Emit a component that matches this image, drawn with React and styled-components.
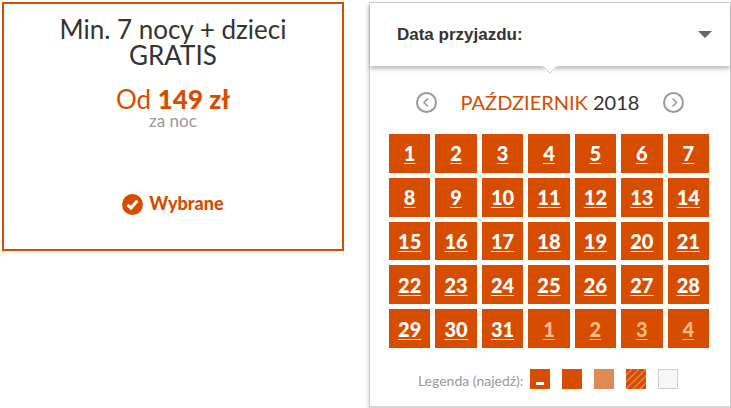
import React from "react";
import styled, { createGlobalStyle } from "styled-components";

const ACCENT = "#d64d00";

const GlobalStyle = createGlobalStyle`
  *, *::before, *::after { box-sizing: border-box; }
  body {
    margin: 0;
    background: #fff;
    color: #333;
    font-family: Lato, "Liberation Sans", sans-serif;
  }
  button { font: inherit; color: inherit; background: none; border: 0; padding: 0; cursor: pointer; }
`;

const Page = styled.main`
  display: grid;
  grid-template-columns: 17fr 18fr;
  column-gap: 25px;
  align-items: start;
  padding: 2px 0 0 2px;
`;

const OfferCard = styled.section`
  display: flex;
  flex-direction: column;
  align-items: center;
  padding: 12px 40px 34px;
  border: 2px solid ${ACCENT};
  text-align: center;
`;

const OfferTitle = styled.h2`
  margin: 0;
  max-width: 250px;
  font-size: 26px;
  font-weight: 400;
  line-height: 26px;
`;

const Price = styled.p`
  margin: 18px 0 0;
  color: ${ACCENT};
  font-size: 26px;
  font-weight: 400;
  line-height: 26px;

  strong { font-weight: 900; }
`;

const PriceUnit = styled.p`
  margin: 0;
  color: #999;
  font-size: 17px;
  line-height: 18px;
`;

const SelectedButton = styled.button`
  display: flex;
  align-items: center;
  gap: 6px;
  margin-top: 60px;

  svg { display: block; margin-top: 4px; }
`;

const SelectedLabel = styled.span`
  color: ${ACCENT};
  font-size: 18px;
  font-weight: 900;
  line-height: 22px;
`;

const Panel = styled.section`
  border: 1px solid #ccc;
  border-bottom: 0;
  box-shadow: -1px 2px 4px rgba(0, 0, 0, 0.15);
`;

const PanelHeader = styled.button`
  position: relative;
  display: flex;
  align-items: center;
  justify-content: space-between;
  width: 100%;
  height: 63px;
  padding: 0 18px 0 27px;
  background: #fff;
  box-shadow: 0 3px 4px rgba(0, 0, 0, 0.25);
`;

const HeaderLabel = styled.span`
  color: #333;
  font-family: "Liberation Sans", Arial, sans-serif;
  font-size: 17px;
  font-weight: 700;
  line-height: 20px;
`;

const Notch = styled.svg`
  position: absolute;
  top: 100%;
  left: 50%;
  transform: translateX(-50%);
`;

const Calendar = styled.div`
  padding: 24px 21px 15px 19px;
`;

const MonthBar = styled.div`
  display: flex;
  align-items: center;
  justify-content: space-between;
  padding: 0 25px 0 27px;
`;

const MonthName = styled.h3`
  margin: 0;
  font-size: 20px;
  font-weight: 400;
  line-height: 24px;

  span { color: ${ACCENT}; }
`;

const ArrowButton = styled.button`
  display: flex;
`;

const Days = styled.div`
  display: grid;
  grid-template-columns: repeat(7, 1fr);
  grid-auto-rows: 1fr;
  gap: 5px;
  height: 214px;
  margin-top: 20px;
`;

const Day = styled.a`
  display: flex;
  align-items: center;
  justify-content: center;
  background: ${ACCENT};
  color: ${(p) => (p.$outside ? "#ffbb8c" : "#fff")};
  font-size: 20px;
  font-weight: 900;
  line-height: 24px;
  text-decoration: underline;
  text-decoration-thickness: 1px;
  text-underline-offset: 2px;
  text-decoration-skip-ink: none;
`;

const Legend = styled.div`
  display: flex;
  align-items: flex-start;
  gap: 12px;
  margin: 21px 0 0 29px;
`;

const LegendLabel = styled.span`
  margin-right: -5px;
  color: #999;
  font-size: 14px;
  line-height: 20px;
  padding-top: 2px;
`;

const swatches = {
  arrival: `background: ${ACCENT};`,
  available: `background: ${ACCENT};`,
  partial: "background: #dd8a55;",
  limited: `background: ${ACCENT};`,
  none: "background: #f7f7f7; border: 1px solid #ccc;",
};

const Swatch = styled.span`
  display: flex;
  width: 20px;
  height: 20px;
  ${(p) => swatches[p.$kind]}
`;

const PanelFoot = styled.div`
  height: 2px;
  background: #d5d5d5;
`;

const days = [
  ...Array.from({ length: 31 }, (_, i) => ({ n: i + 1, outside: false })),
  ...[1, 2, 3, 4].map((n) => ({ n, outside: true })),
];

const legend = [
  { kind: "arrival", title: "Dzień przyjazdu" },
  { kind: "available", title: "Dostępny" },
  { kind: "partial", title: "Częściowo dostępny" },
  { kind: "limited", title: "Ograniczony" },
  { kind: "none", title: "Niedostępny" },
];

function CheckIcon() {
  return (
    <svg width="21" height="21" viewBox="0 0 21 21" aria-hidden="true">
      <circle cx="10.5" cy="10.5" r="10.5" fill={ACCENT} />
      <path d="M5.5 10.8 L9 14 L15.3 6.8" fill="none" stroke="#fff" strokeWidth="3" />
    </svg>
  );
}

function ArrowIcon({ direction }) {
  return (
    <svg width="21" height="21" viewBox="0 0 21 21" fill="none" stroke="#999" aria-hidden="true">
      <circle cx="10.5" cy="10.5" r="9.5" strokeWidth="2" />
      <path
        d={direction === "left" ? "M12 6.5 L8 10.5 L12 14.5" : "M9.5 6.5 L13.5 10.5 L9.5 14.5"}
        strokeWidth="1.5"
      />
    </svg>
  );
}

function SwatchMark({ kind }) {
  if (kind === "arrival") {
    return (
      <svg width="20" height="20" aria-hidden="true">
        <path d="M6 14.5 H14" stroke="#fff" strokeWidth="3" />
      </svg>
    );
  }
  if (kind === "limited") {
    return (
      <svg width="20" height="20" aria-hidden="true">
        <path
          d="M-1 7 L7 -1 M-1 14 L14 -1 M-1 21 L21 -1 M6 21 L21 6 M13 21 L21 13"
          stroke="#e58a50"
          strokeWidth="1.3"
        />
      </svg>
    );
  }
  return null;
}

export default function App() {
  return (
    <>
      <GlobalStyle />
      <Page>
        <OfferCard>
          <OfferTitle>Min. 7 nocy + dzieci GRATIS</OfferTitle>
          <Price>
            Od <strong>149 zł</strong>
          </Price>
          <PriceUnit>za noc</PriceUnit>
          <SelectedButton type="button" aria-pressed="true">
            <CheckIcon />
            <SelectedLabel>Wybrane</SelectedLabel>
          </SelectedButton>
        </OfferCard>

        <Panel>
          <PanelHeader type="button" aria-expanded="true" aria-controls="calendar">
            <HeaderLabel>Data przyjazdu:</HeaderLabel>
            <svg width="14" height="7" viewBox="0 0 14 7" aria-hidden="true">
              <path d="M0 0 H14 L7 7 Z" fill="#666" />
            </svg>
            <Notch width="16" height="8" viewBox="0 0 16 8" aria-hidden="true">
              <path d="M0 0 H16 L8 8 Z" fill="#fff" />
              <path d="M1 0 L8 7 L15 0" fill="none" stroke="#ccc" />
            </Notch>
          </PanelHeader>
          <Calendar id="calendar">
            <MonthBar>
              <ArrowButton type="button" aria-label="Poprzedni miesiąc">
                <ArrowIcon direction="left" />
              </ArrowButton>
              <MonthName>
                <span>PAŹDZIERNIK</span> 2018
              </MonthName>
              <ArrowButton type="button" aria-label="Następny miesiąc">
                <ArrowIcon direction="right" />
              </ArrowButton>
            </MonthBar>
            <Days>
              {days.map(({ n, outside }) => (
                <Day key={`${outside}-${n}`} href="#calendar" $outside={outside}>
                  {n}
                </Day>
              ))}
            </Days>
            <Legend>
              <LegendLabel>Legenda (najedź):</LegendLabel>
              {legend.map(({ kind, title }) => (
                <Swatch key={kind} $kind={kind} title={title}>
                  <SwatchMark kind={kind} />
                </Swatch>
              ))}
            </Legend>
          </Calendar>
          <PanelFoot />
        </Panel>
      </Page>
    </>
  );
}
